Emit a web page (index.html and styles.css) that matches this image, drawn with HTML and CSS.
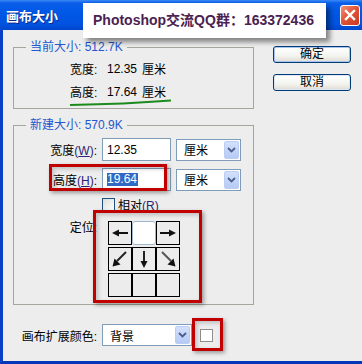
FILE: index.html
```html
<!DOCTYPE html>
<html lang="zh-CN">
<head>
    <meta charset="UTF-8">
    <title>画布大小</title>
    <link rel="stylesheet" href="styles.css">
</head>
<body>
    <div class="window">
        <div class="titlebar">
            <span class="title">画布大小</span>
            <span class="close">
                <svg width="12" height="12" viewBox="0 0 12 12"><path d="M2 2 L10 10 M10 2 L2 10" stroke="#fff" stroke-width="2.4" stroke-linecap="square"/></svg>
            </span>
        </div>
        <div class="body">
            <div class="main">
                <fieldset class="group current">
                    <legend>当前大小: 512.7K</legend>
                    <div class="info-row">
                        <span class="info-label">宽度:</span><span>12.35</span><span class="info-unit">厘米</span>
                    </div>
                    <div class="info-row">
                        <span class="info-label">高度:</span><span>17.64</span><span class="info-unit">厘米</span>
                        <!-- hand drawn green stroke -->
                        <svg class="underline" width="104" height="8" viewBox="0 0 104 8"><path d="M1 6 C 30 5.5, 70 4, 102 1.5" stroke="#1c8a1c" stroke-width="2.2" fill="none"/></svg>
                    </div>
                </fieldset>

                <fieldset class="group new">
                    <legend>新建大小: 570.9K</legend>
                    <div class="field-row">
                        <span class="field-label">宽度<span class="key">(<u>W</u>)</span>:</span>
                        <div class="input">12.35</div>
                        <div class="select">
                            <span class="select-text">厘米</span>
                            <span class="drop"><svg width="9" height="6" viewBox="0 0 9 6"><path d="M1 1 L4.5 4.5 L8 1" stroke="#4a5f8c" stroke-width="1.8" fill="none"/></svg></span>
                        </div>
                    </div>
                    <div class="field-row">
                        <span class="field-label">高度<span class="key">(<u>H</u>)</span>:</span>
                        <div class="input"><span class="selected">19.64</span></div>
                        <div class="select">
                            <span class="select-text">厘米</span>
                            <span class="drop"><svg width="9" height="6" viewBox="0 0 9 6"><path d="M1 1 L4.5 4.5 L8 1" stroke="#4a5f8c" stroke-width="1.8" fill="none"/></svg></span>
                        </div>
                        <div class="mark mark-height"></div>
                    </div>
                    <div class="check-row">
                        <span class="checkbox"></span>
                        <span>相对<span class="key">(<u>R</u>)</span></span>
                    </div>
                    <div class="anchor-row">
                        <span class="field-label anchor-label">定位:</span>
                        <div class="anchor-wrap">
                            <div class="anchor-grid">
                                <div class="cell"><svg width="22" height="22" viewBox="0 0 22 22"><path d="M9 11 H19" stroke="#111" stroke-width="2"/><path d="M3 11 L10 7.5 L10 14.5 Z" fill="#111"/></svg></div>
                                <div class="cell active"></div>
                                <div class="cell"><svg width="22" height="22" viewBox="0 0 22 22"><path d="M3 11 H13" stroke="#111" stroke-width="2"/><path d="M19 11 L12 7.5 L12 14.5 Z" fill="#111"/></svg></div>
                                <div class="cell"><svg width="22" height="22" viewBox="0 0 22 22"><path d="M17 4 L8 13" stroke="#222" stroke-width="2"/><path d="M3.5 18.5 L5.5 10.5 L11.5 16.5 Z" fill="#111"/></svg></div>
                                <div class="cell"><svg width="22" height="22" viewBox="0 0 22 22"><path d="M11 3 V14" stroke="#222" stroke-width="2"/><path d="M11 20 L7.5 13 L14.5 13 Z" fill="#111"/></svg></div>
                                <div class="cell"><svg width="22" height="22" viewBox="0 0 22 22"><path d="M5 4 L14 13" stroke="#555" stroke-width="2"/><path d="M18.5 18.5 L16.5 10.5 L10.5 16.5 Z" fill="#111"/></svg></div>
                                <div class="cell"></div>
                                <div class="cell"></div>
                                <div class="cell"></div>
                            </div>
                            <div class="mark mark-anchor"></div>
                        </div>
                    </div>
                </fieldset>

                <div class="color-row">
                    <span class="color-label">画布扩展颜色:</span>
                    <div class="select wide">
                        <span class="select-text">背景</span>
                        <span class="drop"><svg width="9" height="6" viewBox="0 0 9 6"><path d="M1 1 L4.5 4.5 L8 1" stroke="#4a5f8c" stroke-width="1.8" fill="none"/></svg></span>
                    </div>
                    <span class="swatch">
                        <span class="mark mark-swatch"></span>
                    </span>
                </div>
            </div>

            <div class="buttons">
                <button class="btn default">确定</button>
                <button class="btn">取消</button>
            </div>
        </div>

        <div class="banner">Photoshop交流QQ群：163372436</div>
    </div>
</body>
</html>
```

FILE: styles.css
```css
body {
    margin: 0;
    font-family: "Liberation Sans", "Noto Sans CJK SC", sans-serif;
    font-size: 12px;
    color: #000;
}
.window {
    position: relative;
    width: 362px;
    height: 364px;
    display: flex;
    flex-direction: column;
    overflow: hidden;
}
.titlebar {
    flex: none;
    height: 30px;
    display: flex;
    align-items: center;
    justify-content: space-between;
    padding: 0 2px 0 6px;
    background: linear-gradient(#3a8af5 0, #0b5ee9 3px, #0058e6 40%, #0053e0 80%, #0046cc 100%);
}
.title {
    color: #fff;
    font-weight: 700;
    font-size: 13px;
    text-shadow: 1px 1px 0 #0a2a8a;
}
.close {
    width: 20px;
    height: 21px;
    box-sizing: border-box;
    border: 1px solid #fff;
    border-radius: 3px;
    background: linear-gradient(135deg, #f39277, #e2553a 45%, #c8391d);
    display: flex;
    align-items: center;
    justify-content: center;
}
.body {
    flex: 1;
    display: flex;
    background: #ededed;
    border-left: 3px solid #0a3fc8;
    border-bottom: 3px solid #0636b8;
    padding: 9px 0 0 10px;
}
.main {
    width: 241px;
}
.group {
    margin: 0;
    min-width: 0;
    border: 1px solid #a6a59b;
}
.group legend {
    margin-left: 12px;
    padding: 0 4px;
    line-height: 16px;
    color: #2457d0;
}
.current {
    padding: 2px 0 5px;
}
.info-row {
    position: relative;
    display: flex;
    align-items: center;
    height: 23px;
    padding-left: 56px;
}
.info-label {
    width: 37px;
}
.info-unit {
    margin-left: 5px;
}
.underline {
    position: absolute;
    left: 55px;
    top: 19px;
}
.new {
    margin-top: 8px;
    padding: 5px 0 7px;
}
.field-row {
    position: relative;
    display: flex;
    align-items: center;
    gap: 5px;
    height: 23px;
}
.field-row + .field-row {
    margin-top: 7px;
}
.field-label {
    flex: none;
    width: 83px;
    text-align: right;
}
.key {
    color: #2c2475;
}
.input {
    width: 69px;
    height: 23px;
    box-sizing: border-box;
    border: 1px solid #7f9db9;
    background: #fff;
    padding-left: 4px;
    display: flex;
    align-items: center;
}
.selected {
    background: #316ac5;
    color: #fff;
    line-height: 13px;
    padding: 0 1px 0 0;
}
.select {
    width: 65px;
    height: 22px;
    box-sizing: border-box;
    border: 1px solid #7f9db9;
    background: #fff;
    display: flex;
    align-items: stretch;
    padding: 1px;
}
.select.wide {
    width: 90px;
}
.select-text {
    flex: 1;
    padding-left: 6px;
    display: flex;
    align-items: center;
}
.drop {
    width: 15px;
    box-sizing: border-box;
    border: 1px solid #bccdf4;
    border-radius: 2px;
    background: linear-gradient(#d3e0fb, #b6caf5);
    display: flex;
    align-items: center;
    justify-content: center;
}
.check-row {
    display: flex;
    align-items: center;
    gap: 3px;
    height: 14px;
    margin-top: 6px;
    padding-left: 88px;
}
.checkbox {
    width: 13px;
    height: 13px;
    box-sizing: border-box;
    border: 1px solid #1c5180;
    background: linear-gradient(135deg, #dcdcd7, #fff);
}
.anchor-row {
    display: flex;
    align-items: flex-start;
    margin-top: 10px;
}
.anchor-label {
    line-height: 14px;
}
.anchor-wrap {
    position: relative;
    margin-left: 11px;
}
.anchor-grid {
    display: grid;
    grid-template-columns: repeat(3, 24px);
    grid-auto-rows: 24px;
    row-gap: 2px;
}
.cell {
    box-sizing: border-box;
    border: 1px solid #000;
    background: #ececec;
    display: flex;
    align-items: center;
    justify-content: center;
}
.cell.active {
    border-color: #9fb6cf;
    border-radius: 3px;
    background: #fff;
}
.color-row {
    display: flex;
    align-items: center;
    gap: 5px;
    margin-top: 19px;
}
.color-label {
    width: 84px;
    text-align: right;
}
.swatch {
    position: relative;
    width: 13px;
    height: 13px;
    box-sizing: border-box;
    margin-left: 3px;
    border: 1px solid #8e8e8e;
    background: #fff;
}
.mark {
    position: absolute;
    box-sizing: border-box;
    border: 3px solid #c10000;
    box-shadow: 2px 2px 4px rgba(0, 0, 0, 0.35), inset 2px 2px 4px rgba(0, 0, 0, 0.2);
}
.mark-height {
    left: 35px;
    top: -4px;
    width: 118px;
    height: 27px;
}
.mark-anchor {
    left: -15px;
    top: -11px;
    width: 109px;
    height: 93px;
}
.mark-swatch {
    left: -9px;
    top: -12px;
    width: 31px;
    height: 33px;
}
.buttons {
    margin-left: 19px;
    padding-top: 7px;
    display: flex;
    flex-direction: column;
    gap: 11px;
}
.btn {
    width: 78px;
    height: 17px;
    padding: 0;
    font: inherit;
    line-height: 15px;
    border: 1px solid #003c74;
    border-radius: 3px;
    background: linear-gradient(#fff, #f3f3ef 60%, #dedbd2);
    box-shadow: inset 0 0 0 1px #dde6f7;
}
.btn.default {
    box-shadow: inset 0 0 0 1px #a9c4f3;
}
.banner {
    position: absolute;
    left: 83px;
    top: 3px;
    width: 243px;
    height: 35px;
    box-sizing: border-box;
    padding-left: 10px;
    line-height: 35px;
    background: #fff;
    color: #4a2150;
    font-size: 14px;
    font-weight: 700;
    box-shadow: 4px 4px 5px rgba(0, 0, 0, 0.45);
    white-space: nowrap;
}
```
